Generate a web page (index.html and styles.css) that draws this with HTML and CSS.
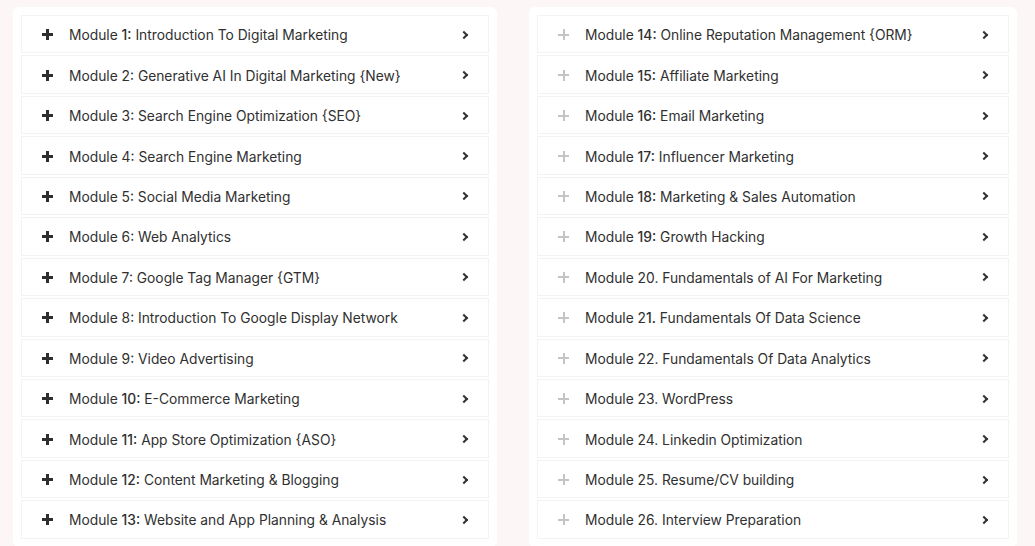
FILE: index.html
```html
<!DOCTYPE html>
<html lang="en">
<head>
<meta charset="utf-8">
<title>Modules</title>
<link rel="stylesheet" href="styles.css">
</head>
<body>
<div class="page">
  <div class="card card-left">
    <div class="row"><span class="plus dark"></span><span class="label">Module <b>1:</b> Introduction To Digital Marketing</span><span class="chev"></span></div>
    <div class="row"><span class="plus dark"></span><span class="label">Module 2: Generative AI In Digital Marketing {New}</span><span class="chev"></span></div>
    <div class="row"><span class="plus dark"></span><span class="label">Module 3: Search Engine Optimization {SEO}</span><span class="chev"></span></div>
    <div class="row"><span class="plus dark"></span><span class="label">Module 4: Search Engine Marketing</span><span class="chev"></span></div>
    <div class="row"><span class="plus dark"></span><span class="label">Module 5: Social Media Marketing</span><span class="chev"></span></div>
    <div class="row"><span class="plus dark"></span><span class="label">Module 6: Web Analytics</span><span class="chev"></span></div>
    <div class="row"><span class="plus dark"></span><span class="label">Module 7: Google Tag Manager {GTM}</span><span class="chev"></span></div>
    <div class="row"><span class="plus dark"></span><span class="label">Module 8: Introduction To Google Display Network</span><span class="chev"></span></div>
    <div class="row"><span class="plus dark"></span><span class="label">Module 9: Video Advertising</span><span class="chev"></span></div>
    <div class="row"><span class="plus dark"></span><span class="label">Module <b>10:</b> E-Commerce Marketing</span><span class="chev"></span></div>
    <div class="row"><span class="plus dark"></span><span class="label">Module <b>11:</b> App Store Optimization {ASO}</span><span class="chev"></span></div>
    <div class="row"><span class="plus dark"></span><span class="label">Module <b>12:</b> Content Marketing &amp; Blogging</span><span class="chev"></span></div>
    <div class="row"><span class="plus dark"></span><span class="label">Module <b>13:</b> Website and App Planning &amp; Analysis</span><span class="chev"></span></div>
  </div>
  <div class="card card-right">
    <div class="row"><span class="plus light"></span><span class="label">Module <b>14:</b> Online Reputation Management {ORM}</span><span class="chev"></span></div>
    <div class="row"><span class="plus light"></span><span class="label">Module <b>15:</b> Affiliate Marketing</span><span class="chev"></span></div>
    <div class="row"><span class="plus light"></span><span class="label">Module <b>16:</b> Email Marketing</span><span class="chev"></span></div>
    <div class="row"><span class="plus light"></span><span class="label">Module <b>17:</b> Influencer Marketing</span><span class="chev"></span></div>
    <div class="row"><span class="plus light"></span><span class="label">Module <b>18:</b> Marketing &amp; Sales Automation</span><span class="chev"></span></div>
    <div class="row"><span class="plus light"></span><span class="label">Module <b>19:</b> Growth Hacking</span><span class="chev"></span></div>
    <div class="row"><span class="plus light"></span><span class="label">Module 20. Fundamentals of AI For Marketing</span><span class="chev"></span></div>
    <div class="row"><span class="plus light"></span><span class="label">Module 2<b>1.</b> Fundamentals Of Data Science</span><span class="chev"></span></div>
    <div class="row"><span class="plus light"></span><span class="label">Module 22. Fundamentals Of Data Analytics</span><span class="chev"></span></div>
    <div class="row"><span class="plus light"></span><span class="label">Module 23. WordPress</span><span class="chev"></span></div>
    <div class="row"><span class="plus light"></span><span class="label">Module 24. Linkedin Optimization</span><span class="chev"></span></div>
    <div class="row"><span class="plus light"></span><span class="label">Module 25. Resume/CV building</span><span class="chev"></span></div>
    <div class="row"><span class="plus light"></span><span class="label">Module 26. Interview Preparation</span><span class="chev"></span></div>
  </div>
</div>
</body>
</html>
```

FILE: styles.css
```css
* { box-sizing: border-box; }
html, body { margin: 0; padding: 0; }
body {
  background: #fcf7f6;
  font-family: Inter, "Noto Sans", "Liberation Sans", sans-serif;
  color: #333;
  overflow: hidden;
}
.page {
  display: flex;
  gap: 32px;
  padding: 7px 0 0 13px;
  align-items: flex-start;
}
.card {
  background: #fff;
  border-radius: 6px;
  padding: 8px;
  display: flex;
  flex-direction: column;
  gap: 2px;
}
.card-left { width: 484px; }
.card-right { width: 488px; }
.row {
  height: 38.45px;
  border: 1px solid #f3f3f3;
  display: flex;
  align-items: center;
  padding: 0 21px 0 20px;
}
.label {
  flex: 1;
  font-size: 13.8px;
  line-height: 20px;
  letter-spacing: 0;
  padding-left: 16px;
  margin-top: 2px;
  white-space: nowrap;
  color: #303030;
}
.label b { font-weight: 500; }
.plus {
  width: 11px;
  height: 11px;
  position: relative;
  flex: none;
  margin-top: 1px;
}
.plus::before, .plus::after {
  content: "";
  position: absolute;
  background: currentColor;
}
.plus::before { left: 0; right: 0; top: 4px; height: 3px; }
.plus::after { top: 0; bottom: 0; left: 4px; width: 3px; }
.plus.dark { color: #2e2e2e; }
.plus.light { color: #c4c4c4; }
.plus.light::before { top: 4.5px; height: 2px; }
.plus.light::after { left: 4.5px; width: 2px; }
.chev {
  width: 6px;
  height: 6px;
  flex: none;
  border-top: 2px solid #333;
  border-right: 2px solid #333;
  transform: rotate(45deg);
  margin-top: 1px;
}
```
